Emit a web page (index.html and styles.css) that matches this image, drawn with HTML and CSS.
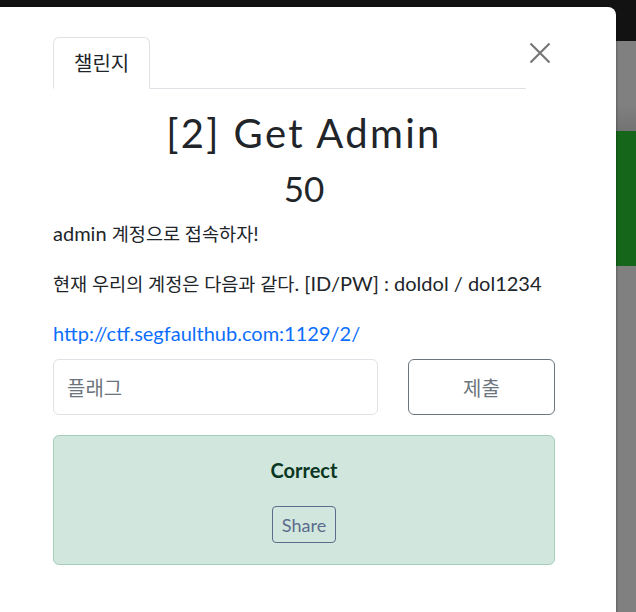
FILE: index.html
```html
<!DOCTYPE html>
<html lang="ko">
<head>
<meta charset="utf-8">
<title>Challenge</title>
<link rel="stylesheet" href="styles.css">
</head>
<body>
<div class="page">
  <div class="page-top"></div>
  <div class="page-gray"></div>
  <div class="page-green"></div>
  <div class="page-rest"></div>
</div>
<div class="modal">
  <div class="modal-head">
    <div class="nav-tabs">
      <div class="tab">챌린지</div>
    </div>
    <button class="close" aria-label="Close">
      <svg width="22" height="22" viewBox="0 0 22 22"><path d="M1.5 1.5 L20.5 20.5 M20.5 1.5 L1.5 20.5" stroke="#777" stroke-width="2.2" fill="none"/></svg>
    </button>
  </div>
  <h3 class="title">[2] Get Admin</h3>
  <h4 class="value">50</h4>
  <div class="desc">
    <p>admin <span class="ko">계정으로 접속하자</span>!</p>
    <p><span class="ko">현재 우리의 계정은 다음과 같다</span>. [ID/PW] : doldol / dol1234</p>
    <p><a href="#">http://ctf.segfaulthub.com:1129/2/</a></p>
  </div>
  <div class="submit-row">
    <div class="flag-input">플래그</div>
    <button class="submit">제출</button>
  </div>
  <div class="alert">
    <strong class="correct">Correct</strong>
    <button class="share">Share</button>
  </div>
</div>
</body>
</html>
```
FILE: styles.css
```css
* { box-sizing: border-box; }
html, body { margin: 0; padding: 0; }
body {
  width: 636px;
  height: 612px;
  overflow: hidden;
  position: relative;
  font-family: "Lato", "Noto Sans CJK KR", sans-serif;
  color: #212529;
}
.page { display: flex; flex-direction: column; height: 612px; }
.page-top { height: 41px; background: #121212; }
.page-gray { height: 90px; background: linear-gradient(#808080 0, #808080 70%, #737373 100%); }
.page-green { height: 135px; background: #15661a; }
.page-rest { flex: 1; background: #808080; }

.modal {
  position: absolute;
  left: -9px;
  top: 7px;
  width: 625px;
  height: 620px;
  background: #fff;
  border-radius: 8px;
  padding: 30px 61px 0 62px;
  box-shadow: 1px 0 2px rgba(0,0,0,0.25);
}
.modal-head { display: flex; align-items: flex-start; }
.nav-tabs {
  flex: 1;
  display: flex;
  border-bottom: 1px solid #dee2e6;
}
.tab {
  margin-bottom: -1px;
  border: 1px solid #dee2e6;
  border-bottom-color: #fff;
  border-radius: 6px 6px 0 0;
  padding: 11px 20px 11px 20px;
  font-size: 20px;
  line-height: 28px;
  color: #212529;
  background: #fff;
}
.close {
  width: 29px;
  height: 30px;
  margin-top: 1px;
  padding: 0 2px 0 0;
  border: 0;
  background: none;
  display: flex;
  align-items: center;
  justify-content: center;
}
.title {
  margin: 20px 0 0;
  text-align: center;
  font-weight: 400;
  font-size: 40px;
  line-height: 48px;
  letter-spacing: 2.35px;
}
.value {
  margin: 10px 0 0;
  text-align: center;
  font-weight: 400;
  font-size: 35px;
  line-height: 42px;
}
.desc { margin-top: 11px; }
.desc p {
  margin: 0 0 22px;
  font-size: 20px;
  line-height: 27px;
}
.desc p:last-child { margin-bottom: 12px; }
.ko { font-size: 0.93em; }
.desc a { color: #0d6efd; text-decoration: none; }
.submit-row {
  display: flex;
  gap: 30px;
}
.flag-input {
  flex: 1;
  height: 56px;
  border: 1px solid #dee2e6;
  border-radius: 6px;
  padding: 0 13px;
  display: flex;
  align-items: center;
  font-size: 20px;
  color: #6c757d;
}
.submit {
  width: 147px;
  height: 56px;
  border: 1px solid #6c757d;
  border-radius: 6px;
  background: #fff;
  font-family: "Lato", "Noto Sans CJK KR", sans-serif;
  font-size: 20px;
  color: #6c757d;
}
.alert {
  margin-top: 20px;
  height: 130px;
  background: #d1e7dd;
  border: 1px solid #a3cfbb;
  border-radius: 6px;
  display: flex;
  flex-direction: column;
  align-items: center;
  padding-top: 20px;
}
.correct {
  font-size: 20px;
  line-height: 28px;
  font-weight: 700;
  color: #0a3622;
}
.share {
  margin-top: 22px;
  height: 37px;
  padding: 0 9px;
  border: 1px solid #5c6b8c;
  border-radius: 4px;
  background: transparent;
  font-family: "Lato", sans-serif;
  font-size: 18px;
  color: #5c6b8c;
}
```
